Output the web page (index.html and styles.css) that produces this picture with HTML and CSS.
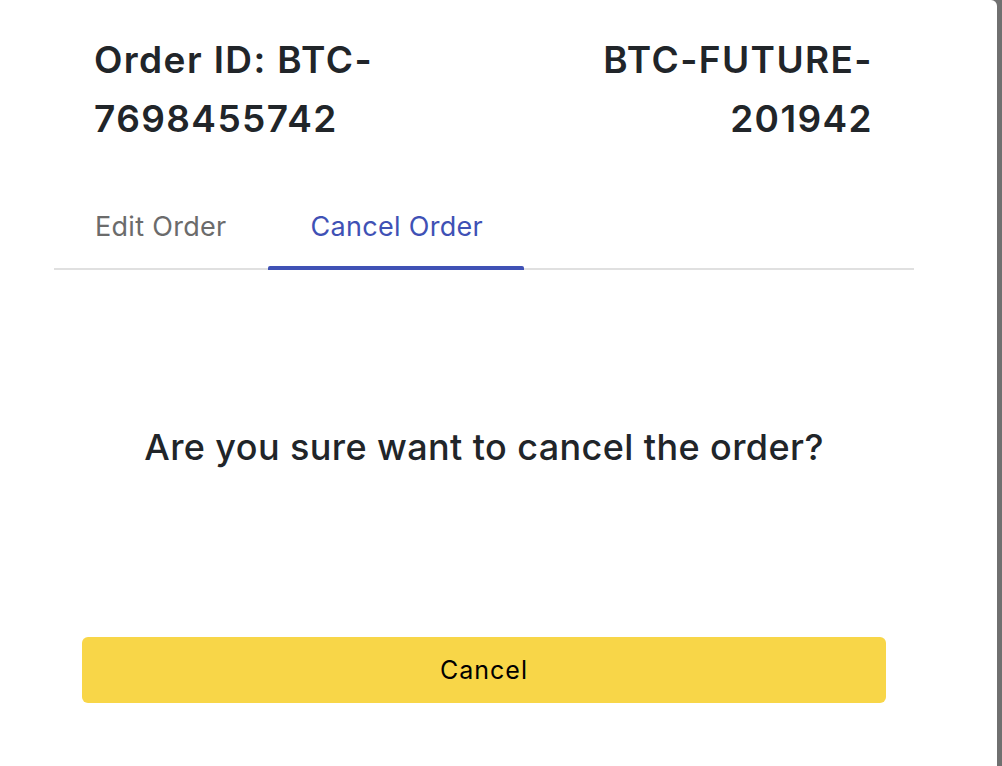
FILE: index.html
```html
<!DOCTYPE html>
<html lang="en">
<head>
<meta charset="utf-8">
<title>Cancel Order</title>
<link rel="stylesheet" href="styles.css">
</head>
<body>
<div class="backdrop">
  <div class="modal">
    <div class="content">
      <div class="header">
        <div class="order-id">Order ID: BTC-7698455742</div>
        <div class="instrument">BTC-FUTURE-201942</div>
      </div>
      <div class="tabs">
        <div class="tab">Edit Order</div>
        <div class="tab active">Cancel Order<span class="indicator"></span></div>
      </div>
      <div class="question">Are you sure want to cancel the order?</div>
      <button class="cancel-btn" type="button">Cancel</button>
    </div>
  </div>
</div>
</body>
</html>
```

FILE: styles.css
```css
html, body {
  margin: 0;
  padding: 0;
}
body {
  font-family: Inter, "Noto Sans", "Liberation Sans", sans-serif;
  color: #212529;
}
.backdrop {
  display: flex;
  height: 766px;
  background: #707070;
}
.modal {
  width: 997px;
  background: #fff;
  border-top-right-radius: 6px;
}
.content {
  width: 860px;
  margin-left: 54px;
  display: flex;
  flex-direction: column;
}
.header {
  display: flex;
  justify-content: space-between;
  padding: 30px 42px 0 40px;
  font-size: 37px;
  font-weight: 600;
  line-height: 59px;
  letter-spacing: 1.4px;
}
.order-id {
  width: 320px;
}
.instrument {
  width: 320px;
  text-align: right;
  margin-right: -1px;
}
.tabs {
  display: flex;
  margin-top: 39px;
  border-bottom: 2px solid #e0e0e0;
}
.tab {
  position: relative;
  padding: 20px 41px 22px 41px;
  font-size: 27px;
  line-height: 39px;
  letter-spacing: 0.3px;
  color: #6b6b6b;
}
.tab.active {
  color: #3f51b5;
  padding: 20px 41px 22px 43px;
}
.indicator {
  position: absolute;
  left: 0;
  right: 0;
  bottom: -2px;
  height: 4px;
  background: #3f51b5;
  border-radius: 2px 2px 0 0;
}
.question {
  margin-top: 152px;
  text-align: center;
  font-size: 36px;
  font-weight: 500;
  line-height: 50px;
  letter-spacing: 0.4px;
}
.cancel-btn {
  margin: 165px 28px 0;
  height: 66px;
  border: none;
  border-radius: 6px;
  background: #f8d648;
  color: #000;
  font-family: inherit;
  font-size: 25px;
  font-weight: 400;
  letter-spacing: 1px;
}
```
